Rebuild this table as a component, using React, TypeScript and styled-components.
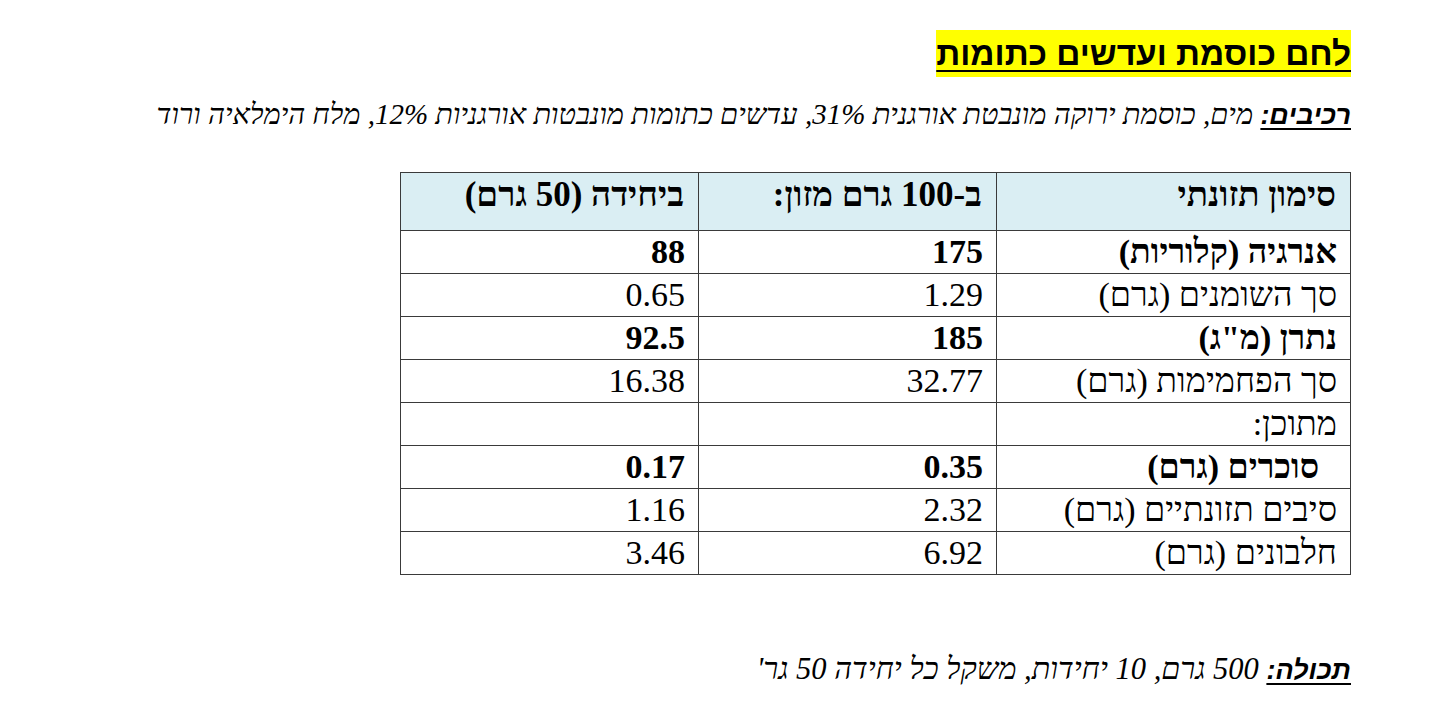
import React from "react";
import styled, { createGlobalStyle } from "styled-components";

const Global = createGlobalStyle`
  html, body { margin: 0; padding: 0; background: #ffffff; }
  body { font-family: "Liberation Serif", "Times New Roman", serif; color: #000; }
`;

const Page = styled.div`
  direction: rtl;
  width: 1440px;
  height: 728px;
  box-sizing: border-box;
  padding: 30px 89px 0 0;
  display: flex;
  flex-direction: column;
  align-items: flex-start;
  overflow: hidden;
`;

const Title = styled.h1`
  margin: 0;
  display: inline-block;
  background: #ffff00;
  font-family: "Liberation Sans", Arial, sans-serif;
  font-weight: bold;
  font-size: 33.4px;
  line-height: 47px;
  height: 47px;
  text-decoration: underline;
  text-decoration-thickness: 2px;
  text-underline-offset: 5px;
`;

const Line = styled.p<{ $top: number; $size: number }>`
  margin: ${(p) => p.$top}px 0 0 0;
  font-family: "Liberation Serif", "Times New Roman", serif;
  font-style: italic;
  font-size: ${(p) => p.$size}px;
  line-height: 34px;
  white-space: nowrap;
`;

const Label = styled.span`
  font-family: "Liberation Sans", Arial, sans-serif;
  font-weight: bold;
  font-style: italic;
  font-size: 27px;
  text-decoration: underline;
  text-decoration-thickness: 2px;
  text-underline-offset: 4px;
`;

const Table = styled.table`
  margin-top: 40px;
  border-collapse: collapse;
  width: 950px;
  table-layout: fixed;
  border: 1.5px solid #3a3a3a;
  font-family: "Liberation Serif", "Times New Roman", serif;
`;

const HeadCell = styled.th<{ $w: number }>`
  width: ${(p) => p.$w}px;
  height: 58px;
  box-sizing: border-box;
  background: #daeef3;
  border: 1px solid #3a3a3a;
  text-align: right;
  vertical-align: top;
  padding: 3px 14px 0 14px;
  font-family: "Liberation Serif", "Times New Roman", serif;
  font-weight: bold;
  font-size: 35px;
  line-height: 38px;
  white-space: nowrap;
`;

const Cell = styled.td<{ $bold?: boolean; $indent?: number }>`
  height: 43px;
  box-sizing: border-box;
  border: 1px solid #3a3a3a;
  text-align: right;
  vertical-align: middle;
  padding: 0 ${(p) => 13 + (p.$indent || 0)}px 0 14px;
  font-family: "Liberation Serif", "Times New Roman", serif;
  font-weight: ${(p) => (p.$bold ? "bold" : "normal")};
  font-size: 34px;
  line-height: 38px;
  white-space: nowrap;
`;

type Row = { name: string; per100: string; unit: string; bold?: boolean; indent?: number };

const rows: Row[] = [
  { name: "אנרגיה (קלוריות)", per100: "175", unit: "88", bold: true },
  { name: "סך השומנים (גרם)", per100: "1.29", unit: "0.65" },
  { name: "נתרן (מ\"ג)", per100: "185", unit: "92.5", bold: true },
  { name: "סך הפחמימות (גרם)", per100: "32.77", unit: "16.38" },
  { name: "מתוכן:", per100: "", unit: "" },
  { name: "סוכרים (גרם)", per100: "0.35", unit: "0.17", bold: true, indent: 18 },
  { name: "סיבים תזונתיים (גרם)", per100: "2.32", unit: "1.16" },
  { name: "חלבונים (גרם)", per100: "6.92", unit: "3.46" },
];

export default function App() {
  return (
    <>
      <Global />
      <Page>
        <Title>לחם כוסמת ועדשים כתומות</Title>
        <Line $top={20} $size={29}>
          <Label>רכיבים:</Label> מים, כוסמת ירוקה מונבטת אורגנית 31%, עדשים כתומות מונבטות אורגניות 12%, מלח הימלאיה ורוד
        </Line>
        <Table>
          <thead>
            <tr>
              <HeadCell $w={354}>סימון תזונתי</HeadCell>
              <HeadCell $w={298}>ב-100 גרם מזון:</HeadCell>
              <HeadCell $w={298}>ביחידה (50 גרם)</HeadCell>
            </tr>
          </thead>
          <tbody>
            {rows.map((r, i) => (
              <tr key={i}>
                <Cell $bold={r.bold} $indent={r.indent}>{r.name}</Cell>
                <Cell $bold={r.bold}>{r.per100}</Cell>
                <Cell $bold={r.bold}>{r.unit}</Cell>
              </tr>
            ))}
          </tbody>
        </Table>
        <Line $top={77} $size={30.5}>
          <Label>תכולה:</Label> 500 גרם, 10 יחידות, משקל כל יחידה 50 גר'
        </Line>
      </Page>
    </>
  );
}
